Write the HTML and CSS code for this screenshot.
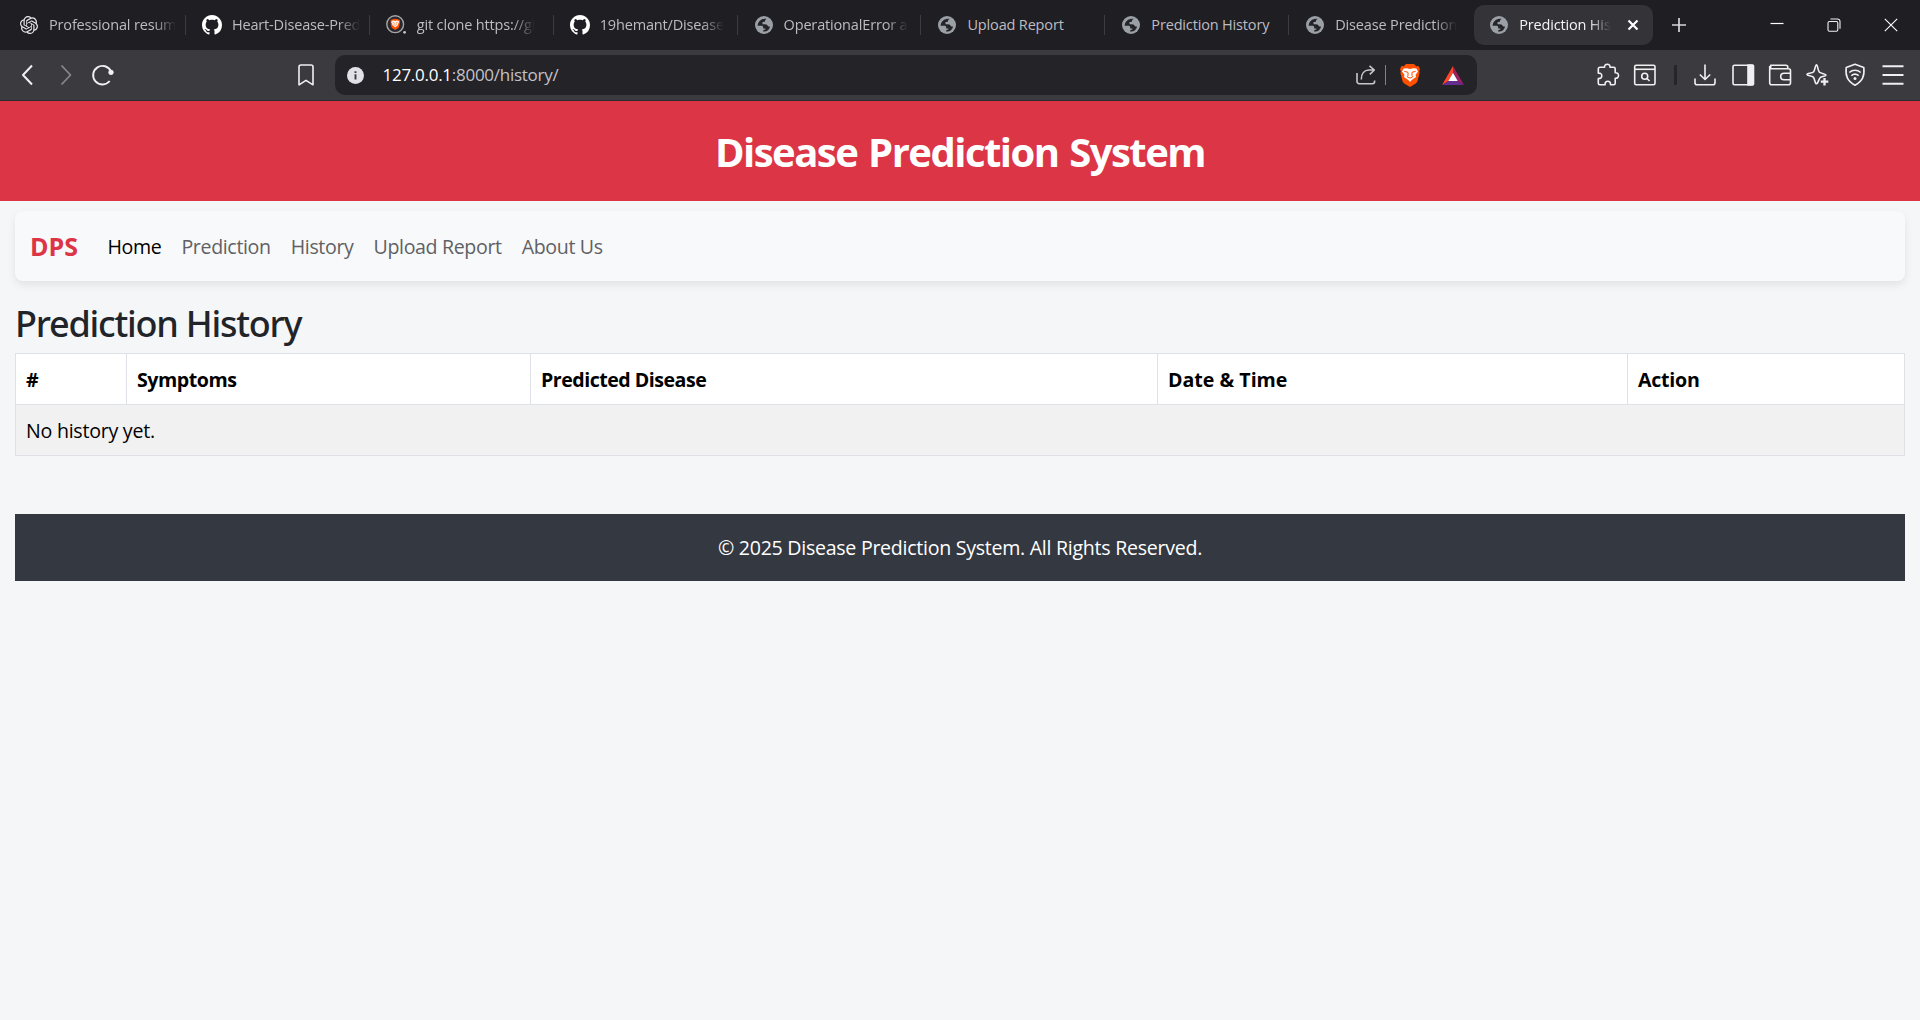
FILE: index.html
```html
<!DOCTYPE html>
<html lang="en">
<head>
<meta charset="utf-8">
<title>Prediction History</title>
<link rel="stylesheet" href="styles.css">
</head>
<body>
<svg class="defs" width="0" height="0">
  <symbol id="globe" viewBox="0 0 18 18">
    <circle cx="9" cy="9" r="9" fill="#9aa0a6"/>
    <path d="M11.500 2.800C9 2.300 6.800 3 5.200 4.500 3.700 5.900 2.700 7.500 2.600 9.800h3.600c1.400 0 2 .6 2 1.800v.8h2.200v1.200c-1.500 0-2.300.7-2.300 1.800 3.400.6 6.300-1.300 7-4.900h-1.900c-.8-1.600-1.600-2.200-3.300-2.300H7.500V5.900h2.100c.3-1.300.8-2.200 1.900-3.100z" fill="#242429"/>
  </symbol>
  <symbol id="github" viewBox="0 0 16 16">
    <path fill="#fff" d="M8 0C3.580 0 0 3.580 0 8c0 3.540 2.290 6.530 5.470 7.590.4.070.55-.17.55-.38 0-.19-.01-.82-.01-1.490-2.010.37-2.530-.49-2.690-.94-.09-.23-.48-.94-.82-1.130-.28-.15-.68-.52-.01-.53.63-.01 1.080.58 1.230.82.72 1.210 1.870.87 2.330.66.070-.52.28-.87.51-1.070-1.780-.2-3.640-.89-3.640-3.950 0-.87.31-1.590.82-2.150-.08-.2-.36-1.020.08-2.120 0 0 .67-.21 2.200.82.64-.18 1.320-.27 2-.27s1.360.09 2 .27c1.530-1.040 2.200-.82 2.200-.82.44 1.100.16 1.920.08 2.120.51.56.82 1.270.82 2.150 0 3.070-1.870 3.750-3.650 3.950.29.25.54.73.54 1.480 0 1.070-.01 1.930-.01 2.200 0 .21.15.46.55.38A8.010 8.010 0 0 0 16 8c0-4.420-3.580-8-8-8z"/>
  </symbol>
  <symbol id="lion" viewBox="0 0 20 23">
    <path fill="#ff5000" d="M6 0h8l2.200 2.300 2.300-.3 1.500 3-.8 2.200.4 1.600-2 8c-.3 1.200-1 2-1.900 2.700L10 23l-5.700-3.500c-.9-.7-1.600-1.500-1.900-2.700l-2-8 .4-1.600L0 5l1.500-3 2.300.3z"/>
    <path fill="#fff" d="M3.600 4.400 7 4.200l3 .8 3-.8 3.400.2 1.600 3-2.500 3.700.6 1.900-2.300 1.600-2.300 1.700L10 18l-1.500-1.700-2.300-1.700L3.900 13l.6-1.900L2 7.400z"/>
    <path d="M4.300 7.300 8 8.300M15.700 7.300 12 8.300M8 8.300v3.200l-.9 1.200L10 14.200l2.900-1.500-.9-1.200V8.300" fill="none" stroke="#ff5000" stroke-width="1"/>
  </symbol>
</svg>

<header class="browser">
  <div class="tabstrip">
    <div class="tab first"><svg class="fav" viewBox="0 0 24 24"><path fill="#e8e8ea" d="M22.282 9.821a5.985 5.985 0 0 0-.516-4.910 6.046 6.046 0 0 0-6.510-2.900A6.065 6.065 0 0 0 4.981 4.182a5.985 5.985 0 0 0-3.998 2.900 6.046 6.046 0 0 0 .743 7.097 5.980 5.980 0 0 0 .510 4.911 6.051 6.051 0 0 0 6.515 2.900A5.985 5.985 0 0 0 13.260 24a6.056 6.056 0 0 0 5.772-4.206 5.990 5.990 0 0 0 3.998-2.900 6.056 6.056 0 0 0-.747-7.073zM13.260 22.430a4.476 4.476 0 0 1-2.876-1.040l.141-.081 4.779-2.758a.795.795 0 0 0 .393-.681v-6.737l2.020 1.168a.071.071 0 0 1 .038.052v5.583a4.504 4.504 0 0 1-4.495 4.494zM3.600 18.304a4.471 4.471 0 0 1-.535-3.014l.142.085 4.783 2.759a.771.771 0 0 0 .780 0l5.843-3.369v2.332a.080.080 0 0 1-.033.062L9.740 19.950a4.500 4.500 0 0 1-6.140-1.646zM2.340 7.896a4.485 4.485 0 0 1 2.366-1.973V11.600a.766.766 0 0 0 .388.677l5.815 3.354-2.020 1.169a.076.076 0 0 1-.071 0l-4.830-2.787A4.504 4.504 0 0 1 2.340 7.872zm16.597 3.855-5.833-3.387L15.119 7.200a.076.076 0 0 1 .071 0l4.830 2.791a4.494 4.494 0 0 1-.676 8.105v-5.678a.790.790 0 0 0-.407-.667zm2.010-3.023-.141-.085-4.774-2.782a.776.776 0 0 0-.785 0L9.409 9.230V6.897a.066.066 0 0 1 .028-.061l4.830-2.787a4.500 4.500 0 0 1 6.680 4.660zM8.307 12.863l-2.020-1.164a.080.080 0 0 1-.038-.057V6.075a4.500 4.500 0 0 1 7.375-3.453l-.142.080L8.704 5.460a.795.795 0 0 0-.393.681zm1.097-2.365 2.602-1.500 2.607 1.500v2.999l-2.597 1.500-2.607-1.500z"/></svg><span class="label">Professional resum</span></div>
    <div class="tab"><svg class="fav fav-git"><use href="#github"/></svg><span class="label">Heart-Disease-Pred</span></div>
    <div class="tab"><svg class="fav fav-search" viewBox="0 0 20 20"><circle cx="9.200" cy="9.200" r="8.400" fill="#29282d" stroke="#a5a5aa" stroke-width="1.400"/><svg x="4.200" y="3.500" width="10" height="11.500"><use href="#lion"/></svg><circle cx="18.600" cy="17.300" r="1.400" fill="#c5c5c8"/></svg><span class="label">git clone https://gi</span></div>
    <div class="tab"><svg class="fav fav-git"><use href="#github"/></svg><span class="label">19hemant/Disease</span></div>
    <div class="tab"><svg class="fav"><use href="#globe"/></svg><span class="label">OperationalError a</span></div>
    <div class="tab"><svg class="fav"><use href="#globe"/></svg><span class="label short">Upload Report</span></div>
    <div class="tab"><svg class="fav"><use href="#globe"/></svg><span class="label short">Prediction History</span></div>
    <div class="tab last"><svg class="fav"><use href="#globe"/></svg><span class="label">Disease Prediction</span></div>
    <div class="tab active"><svg class="fav"><use href="#globe"/></svg><span class="label">Prediction His</span><svg class="tab-close" viewBox="0 0 12 12"><path d="m1.500 1.500 9 9m0-9-9 9" stroke="#fff" stroke-width="2.200"/></svg></div>
    <svg class="plus" viewBox="0 0 14 14"><path d="M7 0v14M0 7h14" stroke="#d8d8da" stroke-width="1.700"/></svg>
    <div class="window-controls">
      <svg viewBox="0 0 14 14"><path d="M.5 5.500h13" stroke="#fff" stroke-width="1.200"/></svg>
      <svg viewBox="0 0 14 14" fill="none" stroke="#f2f2f2" stroke-width="1.100"><rect x="1" y="3.500" width="9.800" height="9.800" rx="1.500"/><path d="M3.500 1h7a2.500 2.500 0 0 1 2.500 2.500v7.200"/></svg>
      <svg viewBox="0 0 14 14"><path d="m.8.8 12.400 12.400m0-12.400L.8 13.200" stroke="#fff" stroke-width="1.100"/></svg>
    </div>
  </div>

  <div class="toolbar">
    <div class="nav-buttons">
      <svg viewBox="0 0 24 24"><path d="M16 2.500 7 12l9 9.500" stroke-width="2"/></svg>
      <svg class="dim" viewBox="0 0 24 24"><path d="m7.500 2.500 9 9.500-9 9.500" stroke-width="1.800"/></svg>
      <svg viewBox="0 0 24 24"><path d="M20 8.500A9.300 9.300 0 1 0 18.700 18" stroke-width="1.900"/><circle cx="20" cy="9.300" r="2.600" fill="#f0f0f2" stroke="none"/></svg>
    </div>
    <svg class="bookmark" viewBox="0 0 24 24"><path d="M5 21.800V4a2 2 0 0 1 2-2h10a2 2 0 0 1 2 2v17.800l-7-4.500z"/></svg>
    <div class="address">
      <svg class="info" viewBox="0 0 17 17"><circle cx="8.500" cy="8.500" r="8.500" fill="#e2e1e8"/><path d="M8.500 7.300v5.200M8.500 4.200v1.800" stroke="#3b3a3f" stroke-width="1.900"/></svg>
      <span class="url"><span class="host">127.0.0.1</span>:8000/history/</span>
      <svg class="share" viewBox="0 0 20 20"><path d="M1 8v8.500A2.200 2.200 0 0 0 3.200 18.700h13.200a2.200 2.200 0 0 0 2.200-2.200v-1M5.300 14.500C5.300 8.500 8.500 5 13 5h5M13.500.8 18.300 5l-4.500 4.300"/></svg>
      <span class="address-sep"></span>
      <svg class="brave"><use href="#lion"/></svg>
      <svg class="bat" viewBox="0 0 22 19"><path fill="#ff4724" d="M11 0v6.500L6.500 15 0 19z"/><path fill="#9e1f63" d="m11 0 11 19-6.500-4L11 6.500z"/><path fill="#662d91" d="m0 19 6.500-4h9l6.500 4z"/><path fill="#fff" d="m11 6.800 4.700 8.200H6.300z"/></svg>
    </div>
    <div class="actions">
      <svg viewBox="0 0 24 24"><path d="M4 4.300h4.600c-.3-2.200 1-3 2.700-3s3 .8 2.700 3h3.700a1.500 1.500 0 0 1 1.500 1.500v4c2.200-.2 3.300 1 3.300 2.700s-1.100 3-3.300 2.700v5a1.500 1.500 0 0 1-1.500 1.500h-3.200c.2-2.400-1-3.400-2.700-3.400s-2.900 1-2.700 3.400H3.800a1.500 1.500 0 0 1-1.500-1.500v-4.700c2.500.2 3.500-1 3.500-2.700s-1-2.900-3.500-2.700V6A1.700 1.700 0 0 1 4 4.300z"/></svg>
      <svg viewBox="0 0 24 24"><rect x="1.700" y="2.200" width="20.300" height="19.600" rx="1.500"/><path d="M2 6.300h20"/><circle cx="11.700" cy="13.300" r="3"/><path d="m14 15.500 2.500 2.500"/></svg>
      <span class="sep"></span>
      <svg viewBox="0 0 24 24"><path d="M12 1.500v14.500M6.800 11.500 12 16.500l5.200-5M2 15.500v4.200a2 2 0 0 0 2 2h16a2 2 0 0 0 2-2v-4.200"/></svg>
      <svg viewBox="0 0 24 24"><rect x="2" y="2.200" width="20" height="19.600" rx="1.500"/><path d="M17 2h4.500a1 1 0 0 1 1 1v18a1 1 0 0 1-1 1H17z" fill="#f0f0f2"/></svg>
      <svg viewBox="0 0 24 24"><path d="M19.800 6V4.300a2 2 0 0 0-2-2H2.700v3.400h17.800a2 2 0 0 1 2 2v12a2 2 0 0 1-2 2H3.700a2 2 0 0 1-2-2V3M22 10.200h-6a3.200 3.200 0 0 0 0 6.600h6"/></svg>
      <svg viewBox="0 0 24 24"><path d="M10.500 1.800c1.300 0 1.200 6 3 7.500 1.500 1.500 6.500 1.600 6.500 2.800s-3 .9-5.500 2.200c-2 1.300-2.200 6.500-4 6.500s-1.500-5-3.200-6.700C5.700 12.500 1 12.800 1 11.500s5-1 6.500-2.500 1.700-7.200 3-7.200z"/><path d="M18.500 15v7.500M14.800 18.700h7.500" stroke-width="2.300"/></svg>
      <svg viewBox="0 0 24 24"><path d="M12 1.300 20.800 4.500c.9 8.200-1 13.500-8.800 17.800C4.200 18 2.300 12.700 3.200 4.500z"/><path d="M6.300 9.500c3.300-3 8.100-3 11.400 0M8.300 12.700c2.300-1.900 5.100-1.900 7.400 0"/><circle cx="12" cy="15.500" r="1.500" fill="#f0f0f2" stroke="none"/></svg>
      <svg viewBox="0 0 24 24"><path d="M1.500 3.300h21M1.500 12h21M1.500 20.700h21" stroke-width="1.900"/></svg>
    </div>
  </div>
</header>

<div class="banner"><h1>Disease Prediction System</h1></div>

<main class="container">
  <nav class="navbar">
    <a class="brand">DPS</a>
    <a class="link current">Home</a>
    <a class="link">Prediction</a>
    <a class="link">History</a>
    <a class="link">Upload Report</a>
    <a class="link">About Us</a>
  </nav>

  <h2>Prediction History</h2>
  <table class="history">
    <thead>
      <tr><th class="col-num">#</th><th class="col-symptoms">Symptoms</th><th class="col-disease">Predicted Disease</th><th class="col-date">Date &amp; Time</th><th class="col-action">Action</th></tr>
    </thead>
    <tbody>
      <tr><td colspan="5">No history yet.</td></tr>
    </tbody>
  </table>

  <footer class="footer">© 2025 Disease Prediction System. All Rights Reserved.</footer>
</main>
</body>
</html>
```
FILE: styles.css
```css
* { box-sizing: border-box; }

body {
  margin: 0;
  background: #f4f6f8;
  color: #212529;
  font-family: "Open Sans", "Noto Sans", sans-serif;
  font-size: 19.6px;
  line-height: 30px;
}

svg { display: block; flex: none; }
.defs { position: absolute; }

/* Browser window */
.browser { height: 101px; background: #3b3a3f; border-bottom: 1px solid #2b2a2f; }

.tabstrip {
  display: flex;
  align-items: center;
  height: 50px;
  padding-left: 2px;
  background: #1f1e23;
}
.tab {
  display: flex;
  align-items: center;
  width: 183.900px;
  height: 20px;
  padding-left: 17px;
  padding-right: 13px;
  border-right: 1px solid #3c3b41;
  font-size: 14.500px;
  line-height: 20px;
  letter-spacing: -.160px;
  color: #bdbcc1;
}
.tab.first { padding-left: 18px; }
.tab.last { border-right-color: transparent; }
.fav { width: 18px; height: 18px; margin-right: 11px; }
.fav-git { width: 20px; height: 20px; margin-left: -1px; margin-right: 10px; }
.fav-search { width: 20px; height: 20px; margin-left: -1px; margin-right: 11px; }
.label {
  white-space: nowrap;
  -webkit-mask-image: linear-gradient(to right, #000 calc(100% - 22px), transparent);
  mask-image: linear-gradient(to right, #000 calc(100% - 22px), transparent);
}
.label.short { -webkit-mask-image: none; mask-image: none; }
.tab.active {
  width: 179px;
  height: 40px;
  margin-left: 1px;
  padding-left: 16px;
  padding-right: 14px;
  border: 0;
  border-radius: 10px;
  background: #343338;
  color: #f4f4f6;
}
.tab-close { width: 12px; height: 12px; margin-left: auto; }
.plus { width: 14px; height: 14px; margin-left: 19px; }
.window-controls { display: flex; gap: 43px; margin-left: auto; padding-right: 22px; }
.window-controls svg { width: 14px; height: 14px; }

.toolbar { display: flex; align-items: center; height: 50px; padding-right: 9px; }
.toolbar svg { fill: none; stroke: #f0f0f2; stroke-width: 1.600; stroke-linejoin: round; }
.toolbar svg use, .toolbar svg.info, .toolbar svg.bat { stroke: none; }
.nav-buttons { display: flex; gap: 13.500px; padding-left: 16px; }
.nav-buttons svg, .bookmark, .actions svg { width: 24px; height: 24px; }
.nav-buttons .dim { stroke: #88878c; }
.bookmark { margin-left: 179px; }
.address {
  display: flex;
  align-items: center;
  width: 1142px;
  height: 40px;
  margin-left: 17px;
  padding: 0 13px 0 11.500px;
  border-radius: 10px;
  background: #242328;
}
.info { width: 17px; height: 17px; }
.url { flex: 1; margin-left: 19px; color: #c3c2c7; font-size: 17px; letter-spacing: -.270px; }
.host { color: #fff; }
.toolbar .share { width: 20px; height: 20px; stroke: #c8c7cc; }
.address-sep { width: 1px; height: 20px; margin: 0 14px 0 9px; background: #828187; }
.brave { width: 20px; height: 23px; }
.bat { width: 22px; height: 19px; margin-left: 22px; }
.actions { display: flex; align-items: center; gap: 13.500px; margin-left: auto; padding-right: 6.500px; }
.sep { width: 3px; height: 20px; margin: 0 3px; border-radius: 1px; background: #26252a; }

/* Page */
.banner {
  display: flex;
  align-items: center;
  justify-content: center;
  height: 100px;
  padding-top: 2px;
  background: #dc3545;
  color: #fff;
}
h1 { margin: 0; font-size: 40px; line-height: 50px; font-weight: 700; letter-spacing: -1.530px; word-spacing: 2px; }

.container { padding: 10px 15px; }

.navbar {
  display: flex;
  align-items: center;
  height: 70px;
  padding: 0 15px;
  border-radius: 8px;
  background: #f8f9fb;
  box-shadow: 0 4px 8px rgba(0, 0, 0, .08);
}
.brand { width: 67.500px; color: #dc3545; font-size: 25px; font-weight: 700; }
.link { padding: 2px 10px 0; color: #5f6164; letter-spacing: -.360px; }
.link.current { color: #000; }

h2 {
  margin: 22px 0 8px;
  font-family: "Noto Sans", "Open Sans", sans-serif;
  font-size: 36px;
  font-weight: 500;
  line-height: 42px;
  letter-spacing: -1.230px;
}

.history {
  width: 100%;
  table-layout: fixed;
  border-collapse: collapse;
  color: #000;
}
.history th, .history td { height: 51px; padding: 2px 10px 0; border: 1px solid #dee2e6; text-align: left; }
.history th { background: #fff; font-weight: 700; }
.history td { background: #f1f1f1; letter-spacing: -.250px; }
.history .col-num { width: 111px; }
.history .col-symptoms { width: 404px; letter-spacing: -.450px; }
.history .col-disease { width: 627px; letter-spacing: -.500px; }
.history .col-date { width: 470px; letter-spacing: 0; }
.history .col-action { letter-spacing: -.250px; }

.footer {
  display: flex;
  align-items: center;
  justify-content: center;
  height: 67px;
  margin-top: 58px;
  background: #343841;
  color: #fff;
  letter-spacing: -.280px;
}
```
